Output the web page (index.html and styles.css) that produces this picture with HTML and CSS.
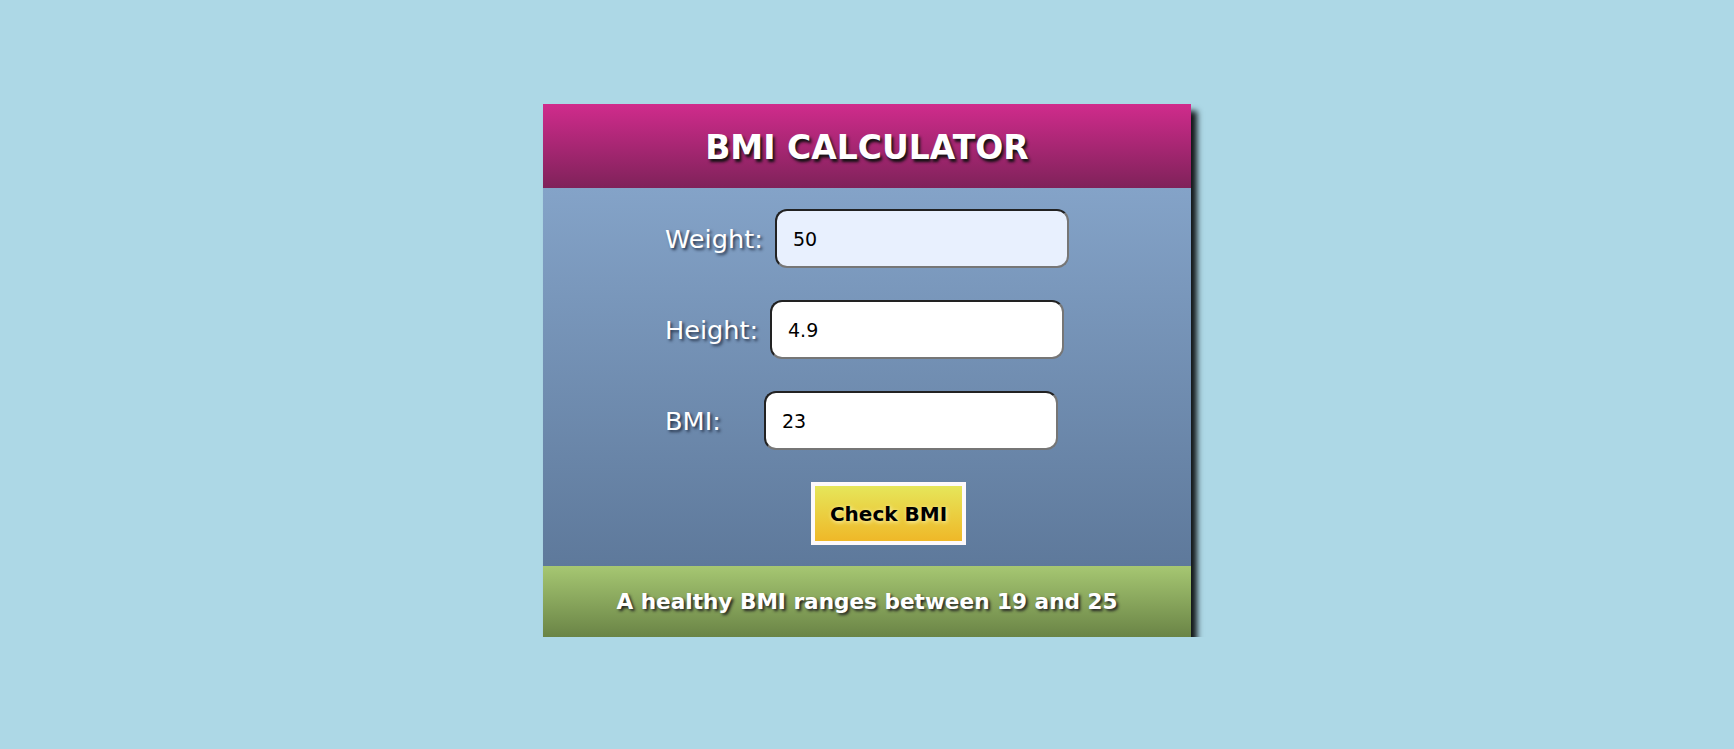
FILE: index.html
```html
<!DOCTYPE html>
<html lang="en">
<head>
<meta charset="utf-8">
<title>BMI Calculator</title>
<link rel="stylesheet" href="styles.css">
</head>
<body>
<main class="page">
  <section class="card">
    <header class="card-header">
      <h1 class="title">BMI CALCULATOR</h1>
    </header>
    <div class="card-body">
      <div class="row">
        <label class="label label-weight" for="weight">Weight:</label>
        <input class="field field-autofill" id="weight" type="text" value="50">
      </div>
      <div class="row">
        <label class="label label-height" for="height">Height:</label>
        <input class="field" id="height" type="text" value="4.9">
      </div>
      <div class="row">
        <label class="label label-bmi" for="bmi">BMI:</label>
        <input class="field" id="bmi" type="text" value="23">
      </div>
      <button class="btn" type="button">Check BMI</button>
    </div>
    <footer class="card-footer">
      <p class="note">A healthy BMI ranges between 19 and 25</p>
    </footer>
  </section>
</main>
</body>
</html>
```
FILE: styles.css
```css
html, body {
  margin: 0;
  padding: 0;
}

body {
  background: #add8e6;
  font-family: "DejaVu Sans", Verdana, sans-serif;
}

.page {
  display: flex;
  justify-content: center;
  padding-top: 104px;
}

.card {
  width: 648px;
  display: flex;
  flex-direction: column;
  box-shadow: 6px 7px 6px rgba(0, 0, 0, 0.9);
}

.card-header {
  height: 84px;
  display: flex;
  align-items: center;
  justify-content: center;
  background: linear-gradient(to bottom, #d02b8c, #7f225a);
}

.title {
  margin: 0;
  padding-top: 2px;
  color: #fff;
  font-size: 33px;
  font-weight: bold;
  text-shadow: 2px 3px 3px #111;
}

.card-body {
  display: flex;
  flex-direction: column;
  align-items: flex-start;
  padding: 21px 0 21px 122px;
  gap: 32px;
  background: linear-gradient(to bottom, #84a3c8, #5e799b);
}

.row {
  display: flex;
  align-items: center;
}

.label {
  color: #fff;
  font-size: 25.6px;
  text-shadow: 2px 2px 3px rgba(20, 30, 50, 0.8);
}

.label-weight { width: 110px; }
.label-height { width: 105px; }
.label-bmi { width: 99px; }

.field {
  box-sizing: border-box;
  width: 294px;
  height: 59px;
  padding: 0 16px;
  border: 2px solid;
  border-color: #222 #767676 #767676 #222;
  border-radius: 12px;
  background: #fff;
  color: #000;
  font-family: "DejaVu Sans", Verdana, sans-serif;
  font-size: 19px;
  outline: none;
}

.field-autofill {
  background: #e8f0fe;
}

.btn {
  box-sizing: border-box;
  width: 155px;
  height: 63px;
  margin-left: 146px;
  border: 4px solid #fdf9fb;
  background: linear-gradient(to bottom, #e6e65a, #efb828);
  color: #000;
  font-family: "DejaVu Sans", Verdana, sans-serif;
  font-size: 20px;
  font-weight: bold;
  text-shadow: 1px 1px 4px #fff8c0;
  cursor: pointer;
  padding: 0;
}

.card-footer {
  height: 71px;
  display: flex;
  align-items: center;
  justify-content: center;
  background: linear-gradient(to bottom, #a6c772, #6a8446);
}

.note {
  margin: 0;
  color: #fff;
  font-size: 21.6px;
  font-weight: bold;
  text-shadow: 2px 2px 3px #222;
}
```
